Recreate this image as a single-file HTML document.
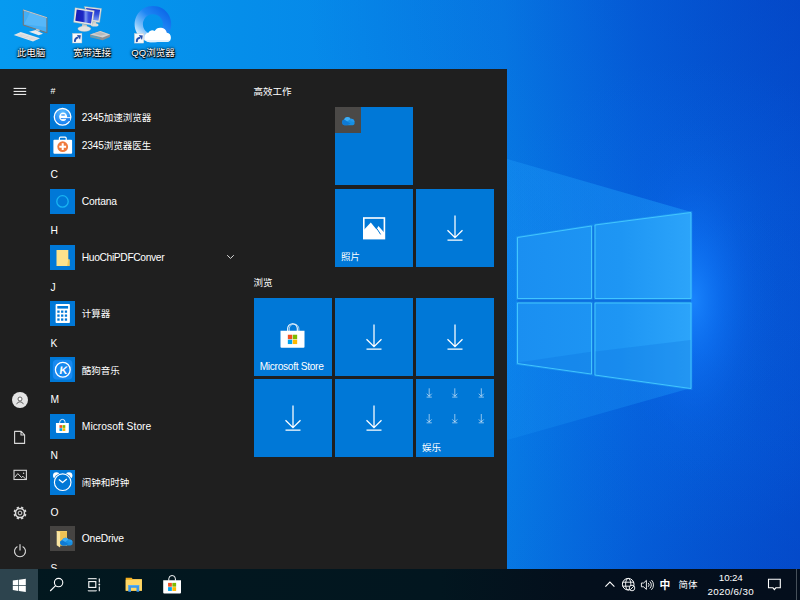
<!DOCTYPE html>
<html lang="zh-CN">
<head>
<meta charset="utf-8">
<title>Windows 10</title>
<style>
*{box-sizing:border-box;margin:0;padding:0}
html,body{width:800px;height:600px;overflow:hidden;background:#0563cf}
body{position:relative;font-family:"Liberation Sans","Noto Sans CJK SC",sans-serif;color:#fff;font-size:9.5px;line-height:1}
#wall{position:absolute;left:0;top:0;width:800px;height:600px}
.dicon{position:absolute;top:0;width:60px;height:64px;text-align:center}
.dicon .lbl{position:absolute;left:-9px;right:-11px;top:47px;font-size:9.5px;line-height:12px;text-align:center;color:#fff;text-shadow:1px 1px 1px #000,0 1px 1px #000,0 0 2px #000,0 0 3px rgba(0,0,0,.8)}
.dicon svg{position:absolute;left:0;top:0}
#start{position:absolute;left:0;top:69px;width:507px;height:500px;background:#1f1f1f;overflow:hidden}
#rail svg{position:absolute}
.hdr{position:absolute;left:50.6px;font-size:10.3px;letter-spacing:-.3px;line-height:12px;color:#fff}
.app{position:absolute;left:50.2px;height:25px;width:190px}
.app .ic{position:absolute;left:0;top:0;width:25px;height:25px;background:#0078d7}
.app .ic svg{position:absolute;left:0;top:0;width:25px;height:25px}
.app .nm{position:absolute;left:31.6px;top:7.4px;font-size:9.5px;line-height:12px;white-space:nowrap;color:#fff}
.app .lat{font-size:10.3px;margin-top:-.2px}
.app .dg{font-size:10.2px;letter-spacing:-.15px}
.ghd{position:absolute;font-size:9.5px;line-height:12px;color:#fff}
.tile{position:absolute;width:78px;height:78px;background:#0078d7}
.tile .tl{position:absolute;left:6px;bottom:3.2px;font-size:9.5px;line-height:12px;white-space:nowrap}
.tile svg{position:absolute}
#task{position:absolute;left:0;top:569px;width:800px;height:31px;background:linear-gradient(90deg,#02181f 0%,#02161f 55%,#040f1c 72%,#040e1c 100%)}
#task svg{position:absolute}
#task .t{position:absolute;font-size:9.5px;line-height:12px;white-space:nowrap;color:#fff}
</style>
</head>
<body>
<!-- WALLPAPER -->
<svg id="wall" viewBox="0 0 800 600">
<defs>
<linearGradient id="bg" x1="0" y1="0" x2="1" y2="0">
<stop offset="0" stop-color="#069af0"/><stop offset=".3" stop-color="#058eea"/><stop offset=".63" stop-color="#077fe8"/><stop offset=".72" stop-color="#0671e3"/><stop offset=".8" stop-color="#0565de"/><stop offset="1" stop-color="#0453d2"/>
</linearGradient>
<radialGradient id="ctr" cx="820" cy="-60" r="520" gradientUnits="userSpaceOnUse">
<stop offset="0" stop-color="#0336b8" stop-opacity=".45"/><stop offset=".5" stop-color="#033abc" stop-opacity=".2"/><stop offset="1" stop-color="#0338b0" stop-opacity="0"/>
</radialGradient>
<radialGradient id="cbr" cx="820" cy="660" r="460" gradientUnits="userSpaceOnUse">
<stop offset="0" stop-color="#0336b8" stop-opacity=".45"/><stop offset=".5" stop-color="#033abc" stop-opacity=".18"/><stop offset="1" stop-color="#0338b0" stop-opacity="0"/>
</radialGradient>
<radialGradient id="glow" cx="0" cy="0" r="1" gradientUnits="userSpaceOnUse" gradientTransform="translate(694 300) scale(85 185)">
<stop offset="0" stop-color="#1a86ff" stop-opacity=".9"/><stop offset=".3" stop-color="#1078fa" stop-opacity=".55"/><stop offset=".65" stop-color="#0a68ec" stop-opacity=".2"/><stop offset="1" stop-color="#0560d8" stop-opacity="0"/>
</radialGradient>
<radialGradient id="glow2" cx="690" cy="300" r="240" gradientUnits="userSpaceOnUse">
<stop offset="0" stop-color="#0c6cf0" stop-opacity=".3"/><stop offset="1" stop-color="#0c6cf0" stop-opacity="0"/>
</radialGradient>
<linearGradient id="beam" x1="507" y1="0" x2="691" y2="0" gradientUnits="userSpaceOnUse">
<stop offset="0" stop-color="#1a98f6" stop-opacity=".36"/><stop offset="1" stop-color="#1e9efa" stop-opacity=".6"/>
</linearGradient>
<linearGradient id="beam2" x1="0" y1="159" x2="0" y2="320" gradientUnits="userSpaceOnUse">
<stop offset="0" stop-color="#1c9af8" stop-opacity=".22"/><stop offset=".5" stop-color="#1c9af8" stop-opacity=".2"/><stop offset="1" stop-color="#1c9af8" stop-opacity="0"/>
</linearGradient>
<linearGradient id="pane" x1="517" y1="0" x2="691" y2="0" gradientUnits="userSpaceOnUse">
<stop offset="0" stop-color="#1a8ff1"/><stop offset=".6" stop-color="#1e96f4"/><stop offset="1" stop-color="#2ca4fa"/>
</linearGradient>
</defs>
<rect width="800" height="600" fill="url(#bg)"/>
<rect width="800" height="600" fill="url(#ctr)"/>
<rect width="800" height="600" fill="url(#cbr)"/>
<rect width="800" height="600" fill="url(#glow2)"/>
<rect width="800" height="600" fill="url(#glow)"/>
<polygon points="507,159 691,212 691,388 507,440" fill="url(#beam)" opacity=".62"/>
<polygon points="507,159 691,212 691,320 507,320" fill="url(#beam2)"/>
<polygon points="517.5,237.5 691,212.5 691,388.5 517.5,363.5" fill="#0c6ee0"/>
<g fill="none" stroke="#38c4ff" stroke-width="2.6" opacity=".3"><polygon points="517.5,237.5 591.5,226 591.5,298.5 517.5,298.5"/><polygon points="595,225 691,212.5 691,298.5 595,298.5"/><polygon points="517.5,303 591.5,303 591.5,374 517.5,363.5"/><polygon points="595,303 691,303 691,388.5 595,375"/></g>
<g fill="url(#pane)" stroke="#46ccff" stroke-width=".9">
<polygon points="517.5,237.5 591.5,226 591.5,298.5 517.5,298.5"/>
<polygon points="595,225 691,212.5 691,298.5 595,298.5"/>
<polygon points="517.5,303 591.5,303 591.5,374 517.5,363.5"/>
<polygon points="595,303 691,303 691,388.5 595,375"/>
</g>
<polygon points="518,362.6 591,351.8 591,373.4 518,363" fill="#0b70de" opacity=".3"/>
<polygon points="595.5,351.6 690.5,340 690.5,388 595.5,374.6" fill="#0b70de" opacity=".27"/>
</svg>

<!-- DESKTOP ICONS -->
<div class="dicon" style="left:0px"><svg width="60" height="46" viewBox="0 0 60 46"><path d="M23.3 10 L46.9 17.7 V32.7 L23.3 25 Z" fill="#44aef6" stroke="#747678" stroke-width="1.1" stroke-linejoin="round"/><path d="M30 12.4 L46.2 18.3 V27 L24 24.3 Z" fill="#6cc4fc" opacity=".45"/><path d="M23.3 10 L46.9 17.7" stroke="#e8eef2" stroke-width=".7"/><path d="M29 31.8 L35.7 30 L43 33.7 L38.7 35.2 Z" fill="#e9eaec"/><path d="M35.4 30.2 l4.2 1.2 v-1.6 l-3 -1 z" fill="#c4c8cc"/><path d="M13.7 35 L20.7 32.1 L40 38.3 L33 41.4 Z" fill="#e4e5e7"/><path d="M16.5 34.9 L35 40.2 M18.8 33.9 L37.4 39.3 M19 36.6 L23.6 34.6 M24 38 L28.6 36 M29 39.6 L33.6 37.6" stroke="#c8cacc" stroke-width=".4"/></svg><div class="lbl">此电脑</div></div>
<div class="dicon" style="left:60.5px"><svg width="60" height="46" viewBox="0.7 0 60 46"><defs><linearGradient id="scr1" x1="0" y1="0" x2="1" y2="0"><stop offset="0" stop-color="#1a1cb4"/><stop offset=".45" stop-color="#1c28c4"/><stop offset=".6" stop-color="#7c98f4"/><stop offset=".75" stop-color="#3a52e0"/><stop offset="1" stop-color="#2434cc"/></linearGradient><linearGradient id="scr2" x1="0" y1="0" x2="0" y2="1"><stop offset="0" stop-color="#1c2cc4"/><stop offset=".5" stop-color="#3450dc"/><stop offset="1" stop-color="#7c9cf4"/></linearGradient></defs>
<path d="M24 6.5 L41.2 8.6 L39.3 22.4 L30 21.2 Z" fill="#e6e4de" stroke="#b4b2ac" stroke-width=".4"/><path d="M25.6 8 L39.8 9.8 L38.2 20.8 L31 19.8 Z" fill="url(#scr2)"/>
<path d="M32.4 21.6 l3.4 .4 l.2 2.2 h-3.8 z" fill="#cfcdc8"/><ellipse cx="34.4" cy="24.9" rx="3.8" ry="1.7" fill="#dedcd8"/>
<path d="M14.8 7.7 L34 10.7 L32 25.3 L13.3 22.2 Z" fill="#eceae4" stroke="#b4b2ac" stroke-width=".4"/><path d="M16.4 9.5 L32.4 12 L30.7 23.5 L15 20.8 Z" fill="url(#scr1)"/>
<path d="M22 24 l4.4 .7 l.4 3.2 h-5.4 z" fill="#cfcdc8"/><ellipse cx="24" cy="28.8" rx="6.5" ry="2.7" fill="#e6e4e0" stroke="#bcbab6" stroke-width=".3"/>
<path d="M29.7 34.4 L40 31 L49.8 34.6 L49.6 37 L42.4 40.2 L30 37.2 Z" fill="#8e9094"/><path d="M29.7 34.4 L40 31 L49.8 34.6 L42.4 37.6 Z" fill="#d0d2d4"/><path d="M31 35.4 L39.6 37.6 L39.4 38.8 L31.2 36.8 Z" fill="#4aa8cc"/><path d="M33 33.8 L40 32 L46 34.2 L40.6 35.8 Z" fill="#b8babc"/>
<g transform="translate(12.20 33.40)"><rect x="0" y="0" width="9.4" height="9.6" fill="#f8f8f8" stroke="#c0c4c8" stroke-width=".4"/><path d="M2.5 8.5 C2.1 5.8 3.4 4.4 5.8 4.2" stroke="#2450b0" stroke-width="2" fill="none"/><path d="M4.4 1.6 L8.4 1.9 L7.6 6.4 Z" fill="#2450b0"/></g></svg><div class="lbl" style="left:-8.5px;right:-11.5px">宽带连接</div></div>
<div class="dicon" style="left:121px"><svg width="60" height="46" viewBox="0 0 60 46"><defs><linearGradient id="qqg" x1=".85" y1=".1" x2=".15" y2=".9"><stop offset="0" stop-color="#0c66e8"/><stop offset=".4" stop-color="#1e86f4"/><stop offset=".75" stop-color="#80c2fb"/><stop offset="1" stop-color="#f4fbff"/></linearGradient></defs>
<path d="M31.9 5.9 a18.3 18.3 0 1 0 .01 0 z M31.9 14.2 a10 10 0 1 1 -.01 0 z" fill="url(#qqg)" fill-rule="evenodd"/>
<path d="M28 42 a4.7 4.7 0 0 1 -.6 -9.3 a4.2 4.2 0 0 1 6.2 -1.6 a6.6 6.6 0 0 1 12.2 1.7 a4.7 4.7 0 0 1 .6 9.2 z" fill="#fff"/><path d="M28 42 a4.7 4.7 0 0 1 -3.6 -2 h25 a4.7 4.7 0 0 1 -3 2 z" fill="#d8ecfc" opacity=".7"/>
<g transform="translate(13.40 33.50)"><rect x="0" y="0" width="9.4" height="9.6" fill="#f8f8f8" stroke="#c0c4c8" stroke-width=".4"/><path d="M2.5 8.5 C2.1 5.8 3.4 4.4 5.8 4.2" stroke="#2450b0" stroke-width="2" fill="none"/><path d="M4.4 1.6 L8.4 1.9 L7.6 6.4 Z" fill="#2450b0"/></g></svg><div class="lbl" style="left:-8px;right:-12px">QQ浏览器</div></div>

<!-- START MENU -->
<div id="start">
<div id="rail">
<svg style="left:13px;top:18.00px" width="14" height="8" viewBox="0 0 14 8"><path d="M.6 1.4h12.6M.6 4.4h12.6M.6 7.4h12.6" stroke="#fff" stroke-width="1"/></svg>
<svg style="left:11px;top:322.00px" width="18" height="18" viewBox="0 0 18 18"><circle cx="9" cy="9" r="8" fill="#e4e4e4"/><circle cx="9" cy="8" r="2" fill="#fff" stroke="#555" stroke-width=".9"/><path d="M5.6 13.2 a3.6 3.6 0 0 1 6.8 0" fill="none" stroke="#555" stroke-width=".9"/></svg>
<svg style="left:13px;top:361.30px" width="14" height="15" viewBox="0 0 14 15"><path d="M1.6 1.4 h6.6 l3.4 3.4 v8.6 h-10 z M8 1.4 v3.6 h3.6" fill="none" stroke="#d8d8d8" stroke-width="1.1" stroke-linejoin="round"/></svg>
<svg style="left:13px;top:400.30px" width="15" height="12" viewBox="0 0 15 12"><rect x="1" y="1.3" width="12.4" height="9.2" fill="none" stroke="#d8d8d8" stroke-width="1.1"/><path d="M1.8 8.2 L4.8 4.6 L8.6 8.6 L9.8 7.2 L12.6 10" fill="none" stroke="#d8d8d8" stroke-width="1"/><circle cx="10.6" cy="4.2" r=".7" fill="#d8d8d8"/></svg>
<svg style="left:12px;top:435.80px" width="16" height="16" viewBox="-8 -8 16 16"><circle r="4.5" fill="none" stroke="#dcdcdc" stroke-width="1.5"/><path d="M4.53 1.88 L6.01 2.49" stroke="#dcdcdc" stroke-width="2.3"/><path d="M1.88 4.53 L2.49 6.01" stroke="#dcdcdc" stroke-width="2.3"/><path d="M-1.88 4.53 L-2.49 6.01" stroke="#dcdcdc" stroke-width="2.3"/><path d="M-4.53 1.88 L-6.01 2.49" stroke="#dcdcdc" stroke-width="2.3"/><path d="M-4.53 -1.88 L-6.01 -2.49" stroke="#dcdcdc" stroke-width="2.3"/><path d="M-1.88 -4.53 L-2.49 -6.01" stroke="#dcdcdc" stroke-width="2.3"/><path d="M1.88 -4.53 L2.49 -6.01" stroke="#dcdcdc" stroke-width="2.3"/><path d="M4.53 -1.88 L6.01 -2.49" stroke="#dcdcdc" stroke-width="2.3"/><circle r="1.9" fill="none" stroke="#dcdcdc" stroke-width="1"/></svg>
<svg style="left:12px;top:474.20px" width="16" height="16" viewBox="0 0 16 16"><path d="M5.4 3.4 a5.5 5.5 0 1 0 5.2 0" fill="none" stroke="#d8d8d8" stroke-width="1.1"/><path d="M8 1.2 v6.2" stroke="#d8d8d8" stroke-width="1.2"/></svg>
</div>
<div id="list"><div class="hdr" style="top:15.68px;font-size:8.8px;margin-top:.6px">#</div>
<div class="app" style="top:35.20px"><div class="ic" style="background:#0078d7"><svg viewBox="0 0 25 25"><defs><radialGradient id="g2345" cx=".5" cy=".25" r=".8"><stop offset="0" stop-color="#5cbcff"/><stop offset="1" stop-color="#1078ee"/></radialGradient></defs>
<circle cx="12.55" cy="12.8" r="8.3" fill="url(#g2345)" stroke="#fff" stroke-width="1.3"/>
<ellipse cx="13.15" cy="12.8" rx="3.95" ry="4.3" fill="#fff"/><ellipse cx="13.1" cy="11" rx="2.3" ry=".75" fill="#3a9af8"/><path d="M10.8 15.1 h9 v-1 h-9 z" fill="#2488f2"/><path d="M16.2 14.1 h4 v3 h-4 z" fill="#2082f0"/><path d="M13 13.2 H20.7 v.95 H13 z" fill="#fff"/></svg></div><div class="nm"><span class="dg">2345</span>加速浏览器</div></div>
<div class="app" style="top:63.33px"><div class="ic" style="background:#0078d7"><svg viewBox="0 0 25 25"><path d="M9.4 8 v-1.7 a1.1 1.1 0 0 1 1.1 -1.1 h4.6 a1.1 1.1 0 0 1 1.1 1.1 v1.7" fill="none" stroke="#fff" stroke-width="1.2"/>
<rect x="3.4" y="7.7" width="18.7" height="14" rx="1" fill="#fff"/>
<circle cx="12.7" cy="14.7" r="5.4" fill="#f07a3c"/>
<path d="M11.7 11.3 h2 v2.4 h2.4 v2 h-2.4 v2.4 h-2 v-2.4 h-2.4 v-2 h2.4 z" fill="#fff"/></svg></div><div class="nm"><span class="dg">2345</span>浏览器医生</div></div>
<div class="hdr" style="top:100.05px">C</div>
<div class="app" style="top:119.58px"><div class="ic" style="background:#0078d7"><svg viewBox="0 0 25 25"><circle cx="12.5" cy="12.4" r="5.7" fill="none" stroke="#18b4f2" stroke-width="1.3"/></svg></div><div class="nm lat"><span style="letter-spacing:-0.25px">Cortana</span></div></div>
<div class="hdr" style="top:156.30px">H</div>
<div class="app" style="top:175.82px"><div class="ic" style="background:#0078d7"><svg viewBox="0 0 25 25"><path d="M6.5 5 h11.8 v9.5 h1.2 v6.5 h-13 z" fill="#fde28c"/><path d="M18.3 14.5 h1.2 v6.5 h-2.4 z" fill="#f3c95a"/></svg></div><div class="nm lat"><span style="letter-spacing:-0.38px">HuoChiPDFConver</span></div></div>
<div class="hdr" style="top:212.55px">J</div>
<div class="app" style="top:232.07px"><div class="ic" style="background:#0078d7"><svg viewBox="0 0 25 25"><rect x="5.6" y="3.1" width="14.3" height="19" rx=".8" fill="#fff"/><rect x="7.3" y="5" width="10.8" height="2.6" fill="#0078d7"/><rect x="7.30" y="9.50" width="2.3" height="2.3" fill="#0078d7"/><rect x="11.05" y="9.50" width="2.3" height="2.3" fill="#0078d7"/><rect x="14.80" y="9.50" width="2.3" height="2.3" fill="#0078d7"/><rect x="7.30" y="13.45" width="2.3" height="2.3" fill="#0078d7"/><rect x="11.05" y="13.45" width="2.3" height="2.3" fill="#0078d7"/><rect x="14.80" y="13.45" width="2.3" height="2.3" fill="#0078d7"/><rect x="7.30" y="17.40" width="2.3" height="2.3" fill="#0078d7"/><rect x="11.05" y="17.40" width="2.3" height="2.3" fill="#0078d7"/><rect x="14.80" y="17.40" width="2.3" height="2.3" fill="#0078d7"/></svg></div><div class="nm">计算器</div></div>
<div class="hdr" style="top:268.80px">K</div>
<div class="app" style="top:288.32px"><div class="ic" style="background:#0078d7"><svg viewBox="0 0 25 25"><rect x="2.8" y="2.8" width="19.6" height="19.6" rx="4" fill="#1889f0"/><circle cx="12.8" cy="12.7" r="7.4" fill="none" stroke="#fff" stroke-width="1.3"/>
<text transform="translate(13 16.7) skewX(-8)" font-family="Liberation Sans,sans-serif" font-size="11" font-weight="bold" fill="#fff" text-anchor="middle">K</text></svg></div><div class="nm">酷狗音乐</div></div>
<div class="hdr" style="top:325.05px">M</div>
<div class="app" style="top:344.57px"><div class="ic" style="background:#0078d7"><svg viewBox="0 0 25 25"><path d="M9.70 9.50 v-1.40 a2.70 2.70 0 0 1 5.40 0 v1.40" fill="none" stroke="#fff" stroke-width="0.90"/><path d="M5.95 9.00 h12.90 v8.90 a1 1 0 0 1 -1 1 h-10.90 a1 1 0 0 1 -1 -1 z" fill="#fff"/><rect x="9.49" y="11.13" width="2.75" height="2.75" fill="#f25022"/><rect x="12.56" y="11.13" width="2.75" height="2.75" fill="#7fba00"/><rect x="9.49" y="14.21" width="2.75" height="2.75" fill="#00a4ef"/><rect x="12.56" y="14.21" width="2.75" height="2.75" fill="#ffb900"/></svg></div><div class="nm lat"><span style="letter-spacing:0.02px">Microsoft Store</span></div></div>
<div class="hdr" style="top:381.30px">N</div>
<div class="app" style="top:400.82px"><div class="ic" style="background:#0078d7"><svg viewBox="0 0 25 25"><circle cx="6.4" cy="5.6" r="3.4" fill="#fff"/><circle cx="19" cy="5.6" r="3.4" fill="#fff"/>
<circle cx="12.7" cy="12.2" r="9.4" fill="#0078d7"/>
<circle cx="12.7" cy="12.2" r="8.3" fill="#0078d7" stroke="#fff" stroke-width="1.15"/>
<path d="M8.9 9.4 L12.6 12.5 L16.8 9" fill="none" stroke="#fff" stroke-width="1.3" stroke-linejoin="round"/></svg></div><div class="nm">闹钟和时钟</div></div>
<div class="hdr" style="top:437.55px">O</div>
<div class="app" style="top:457.07px"><div class="ic" style="background:#464442"><svg viewBox="0 0 25 25"><path d="M6.7 4.9 h10.3 v14.6 h-7.4 z" fill="#f3cb62"/><path d="M10 6 h7 v13.5 h-7 z" fill="#ecbb4a" opacity=".6"/><path d="M6.7 4.9 l3.4 1.1 v15.5 l-3.4 -2.2 z" fill="#fbe6a2"/><g transform="translate(9.80 11.40) scale(0.533 0.533)"><path d="M5.2 15 a5 5 0 0 1 -1 -9.8 a7 7 0 0 1 12.6 -1.2 a5.6 5.6 0 0 1 7 5.8 a4.2 4.2 0 0 1 -3.6 5.2 z" fill="#1690e4"/><path d="M4.2 5.2 a7 7 0 0 1 12.6 -1.2 l-7 4.4 z" fill="#3eacf4"/><path d="M16.8 4 a5.6 5.6 0 0 1 7 5.8 l-8 -2.2 z" fill="#2499ec"/><path d="M5.2 15 a5 5 0 0 1 -1 -9.8 l12 7 l-6 2.8 z" fill="#0f7ad4"/></g></svg></div><div class="nm lat"><span style="letter-spacing:-0.19px">OneDrive</span></div></div>
<div class="hdr" style="top:493.80px">S</div>
<svg style="position:absolute;left:226px;top:185.00px" width="9" height="6" viewBox="0 0 9 6"><path d="M1.2 1.2 L4.5 4.4 L7.8 1.2" fill="none" stroke="#ddd" stroke-width="1"/></svg></div>
<div id="tiles"><div class="ghd" style="left:253.5px;top:16.50px">高效工作</div>
<div class="ghd" style="left:253.5px;top:207.50px">浏览</div>
<div class="tile" style="height:78.7px;left:334.90px;top:37.80px"><div style="position:absolute;left:0;top:0;width:26px;height:26px;background:#4b4947"></div><svg style="left:0;top:0" width="26" height="26" viewBox="0 0 26 26"><g transform="translate(6.80 9.60) scale(0.533 0.573)"><path d="M5.2 15 a5 5 0 0 1 -1 -9.8 a7 7 0 0 1 12.6 -1.2 a5.6 5.6 0 0 1 7 5.8 a4.2 4.2 0 0 1 -3.6 5.2 z" fill="#1690e4"/><path d="M4.2 5.2 a7 7 0 0 1 12.6 -1.2 l-7 4.4 z" fill="#3eacf4"/><path d="M16.8 4 a5.6 5.6 0 0 1 7 5.8 l-8 -2.2 z" fill="#2499ec"/><path d="M5.2 15 a5 5 0 0 1 -1 -9.8 l12 7 l-6 2.8 z" fill="#0f7ad4"/></g></svg></div>
<div class="tile" style="left:334.90px;top:119.50px"><svg style="left:0;top:0" width="78" height="78" viewBox="0 0 78 78"><rect x="28.8" y="29" width="20.6" height="20.6" fill="none" stroke="#fff" stroke-width="1.6"/><path d="M29 49 V40.8 L35.8 33.4 L41.5 40.4 L43.4 37 L49.2 43.6 V49 Z" fill="#fff"/><path d="M41.9 39.6 L45.6 45.4" stroke="#0078d7" stroke-width="1"/></svg><div class="tl">照片</div></div>
<div class="tile" style="left:416.10px;top:119.50px"><svg style="left:0;top:0" width="78" height="78" viewBox="0 0 78 78"><path d="M39 26.5 V48.6 M31.5 41.2 L39 48.7 L46.5 41.2 M31.5 51 H46.5" fill="none" stroke="#fff" stroke-width="1.25"/></svg></div>
<div class="tile" style="left:253.70px;top:228.90px"><svg style="left:0;top:0" width="78" height="78" viewBox="0 0 78 78"><path d="M33.70 33.30 v-2.80 a4.80 4.80 0 0 1 9.60 0 v2.80" fill="none" stroke="#fff" stroke-width="1.10"/><path d="M35.30 33.30 v-2.50 a4.80 4.80 0 0 1 9.60 0 v2.50" fill="none" stroke="#fff" stroke-width="0.88" opacity=".75"/><path d="M26.50 32.80 h24.00 v16.00 a1 1 0 0 1 -1 1 h-22.00 a1 1 0 0 1 -1 -1 z" fill="#fff"/><rect x="33.84" y="36.74" width="4.40" height="4.40" fill="#f25022"/><rect x="38.76" y="36.74" width="4.40" height="4.40" fill="#7fba00"/><rect x="33.84" y="41.66" width="4.40" height="4.40" fill="#00a4ef"/><rect x="38.76" y="41.66" width="4.40" height="4.40" fill="#ffb900"/></svg><div class="tl" style="font-size:10.2px;letter-spacing:-.31px">Microsoft Store</div></div>
<div class="tile" style="left:334.90px;top:228.90px"><svg style="left:0;top:0" width="78" height="78" viewBox="0 0 78 78"><path d="M39 26.5 V48.6 M31.5 41.2 L39 48.7 L46.5 41.2 M31.5 51 H46.5" fill="none" stroke="#fff" stroke-width="1.25"/></svg></div>
<div class="tile" style="left:416.10px;top:228.90px"><svg style="left:0;top:0" width="78" height="78" viewBox="0 0 78 78"><path d="M39 26.5 V48.6 M31.5 41.2 L39 48.7 L46.5 41.2 M31.5 51 H46.5" fill="none" stroke="#fff" stroke-width="1.25"/></svg></div>
<div class="tile" style="left:253.70px;top:310.20px"><svg style="left:0;top:0" width="78" height="78" viewBox="0 0 78 78"><path d="M39 26.5 V48.6 M31.5 41.2 L39 48.7 L46.5 41.2 M31.5 51 H46.5" fill="none" stroke="#fff" stroke-width="1.25"/></svg></div>
<div class="tile" style="left:334.90px;top:310.20px"><svg style="left:0;top:0" width="78" height="78" viewBox="0 0 78 78"><path d="M39 26.5 V48.6 M31.5 41.2 L39 48.7 L46.5 41.2 M31.5 51 H46.5" fill="none" stroke="#fff" stroke-width="1.25"/></svg></div>
<div class="tile" style="left:416.10px;top:310.20px"><svg style="left:0;top:0" width="78" height="78" viewBox="0 0 78 78"><path d="M13.20 9.30 v8 M10.70 14.70 l2.5 2.6 l2.5 -2.6 M10.60 18.10 h5.2" fill="none" stroke="#fff" stroke-width=".8" opacity=".7"/><path d="M38.80 9.30 v8 M36.30 14.70 l2.5 2.6 l2.5 -2.6 M36.20 18.10 h5.2" fill="none" stroke="#fff" stroke-width=".8" opacity=".7"/><path d="M65.30 9.30 v8 M62.80 14.70 l2.5 2.6 l2.5 -2.6 M62.70 18.10 h5.2" fill="none" stroke="#fff" stroke-width=".8" opacity=".7"/><path d="M13.20 35.00 v8 M10.70 40.40 l2.5 2.6 l2.5 -2.6 M10.60 43.80 h5.2" fill="none" stroke="#fff" stroke-width=".8" opacity=".7"/><path d="M38.80 35.00 v8 M36.30 40.40 l2.5 2.6 l2.5 -2.6 M36.20 43.80 h5.2" fill="none" stroke="#fff" stroke-width=".8" opacity=".7"/><path d="M65.30 35.00 v8 M62.80 40.40 l2.5 2.6 l2.5 -2.6 M62.70 43.80 h5.2" fill="none" stroke="#fff" stroke-width=".8" opacity=".7"/></svg><div class="tl">娱乐</div></div></div>
</div>

<!-- TASKBAR -->
<div id="task">
<div style="position:absolute;left:0;top:0;width:38px;height:31px;background:#2d444e"></div>
<svg style="left:12px;top:8.50px" width="15" height="15" viewBox="0 0 15 15"><path d="M.8 2.6 L6.3 1.8 V7 H.8 Z M7 1.7 L13.8 .7 V7 H7 Z M.8 7.7 H6.3 V12.9 L.8 12.1 Z M7 7.7 H13.8 V14 L7 13 Z" fill="#fff"/></svg>
<svg style="left:48px;top:6.50px" width="18" height="18" viewBox="0 0 18 18"><circle cx="10.6" cy="6.6" r="4.2" fill="none" stroke="#fff" stroke-width="1.1"/><path d="M7.6 9.7 L2.2 15" stroke="#fff" stroke-width="1.1"/></svg>
<svg style="left:87px;top:8.60px" width="15" height="14" viewBox="0 0 15 14"><path d="M1.2 1.2 V.7 H9.4 V1.2 M1.2 12.4 V12.9 H9.4 V12.4" fill="none" stroke="#fff" stroke-width="1"/><rect x="1.8" y="3.6" width="7" height="5.8" fill="none" stroke="#fff" stroke-width="1.1"/><path d="M12.3 .4 V4.4 M12.3 8.6 V13.2" stroke="#fff" stroke-width="1.1"/><circle cx="12.3" cy="6.5" r=".9" fill="#fff"/></svg>
<svg style="left:125px;top:8.00px" width="18" height="16" viewBox="0 0 18 16"><path d="M.7 .8 h6 l1.1 1.5 h9.1 v11.5 h-16.2 z" fill="#f2ac1e"/><path d="M.7 2.7 h6.4 l.8 -.5 h9 v11.6 h-16.2 z" fill="#ffd766"/><path d="M3.3 14.7 v-6.6 h10.9 v6.6 h-2.7 v-4 h-5.5 v4 z" fill="#3a98ea"/><path d="M3.3 8.1 h10.9 v1 h-10.9 z" fill="#5ab0f4"/></svg>
<svg style="left:161px;top:4.00px" width="22" height="22" viewBox="0 0 22 22"><path d="M7.80 7.70 v-1.90 a3.30 3.30 0 0 1 6.60 0 v1.90" fill="none" stroke="#fff" stroke-width="1.00"/><path d="M2.20 7.20 h17.80 v12.20 a1 1 0 0 1 -1 1 h-15.80 a1 1 0 0 1 -1 -1 z" fill="#fff"/><rect x="7.07" y="9.87" width="3.80" height="3.80" fill="#f25022"/><rect x="11.33" y="9.87" width="3.80" height="3.80" fill="#7fba00"/><rect x="7.07" y="14.13" width="3.80" height="3.80" fill="#00a4ef"/><rect x="11.33" y="14.13" width="3.80" height="3.80" fill="#ffb900"/></svg>

<svg style="left:604px;top:11.30px" width="12" height="8" viewBox="0 0 12 8"><path d="M1.4 6.6 L5.9 2 L10.4 6.6" fill="none" stroke="#fff" stroke-width="1.1"/></svg>
<svg style="left:621px;top:8.20px" width="15" height="15" viewBox="0 0 15 15"><circle cx="7.2" cy="7.2" r="5.8" fill="none" stroke="#fff" stroke-width="1"/><ellipse cx="7.2" cy="7.2" rx="2.6" ry="5.8" fill="none" stroke="#fff" stroke-width=".9"/><path d="M1.6 5.2 H12.8 M1.6 9.2 H12.8" stroke="#fff" stroke-width=".9"/><circle cx="11" cy="11" r="2.8" fill="#04101c" stroke="#fff" stroke-width=".9"/><path d="M9.2 12.8 L12.8 9.2" stroke="#fff" stroke-width=".9"/></svg>
<svg style="left:640px;top:9.60px" width="15" height="12" viewBox="0 0 15 12"><path d="M1.4 4 H3.6 L6.4 1.4 V10.4 L3.6 7.8 H1.4 Z" fill="none" stroke="#fff" stroke-width=".9" stroke-linejoin="round"/><path d="M8.2 4 a2.6 2.6 0 0 1 0 3.8 M9.8 2.4 a4.8 4.8 0 0 1 0 7 M11.4 1 a6.8 6.8 0 0 1 0 9.8" fill="none" stroke="#fff" stroke-width=".9"/></svg>
<div class="t" style="left:659.5px;top:9.60px;font-size:10.8px;font-weight:bold">中</div>
<div class="t" style="left:678.5px;top:9.60px">简体</div>
<div class="t" style="left:700px;width:61.5px;text-align:center;top:3.00px;font-size:9.8px;letter-spacing:-.15px">10:24</div>
<div class="t" style="left:700px;width:61.5px;text-align:center;top:17.30px;font-size:9.8px;letter-spacing:.3px">2020/6/30</div>
<svg style="left:767px;top:8.60px" width="15" height="14" viewBox="0 0 15 14"><path d="M1.5 1.2 H13.3 V9.8 H8.8 L7.4 11.6 L6 9.8 H1.5 Z" fill="none" stroke="#fff" stroke-width="1.1"/></svg>
<div style="position:absolute;left:796px;top:0;width:1px;height:31px;background:#46505a"></div>
</div>
</body>
</html>
